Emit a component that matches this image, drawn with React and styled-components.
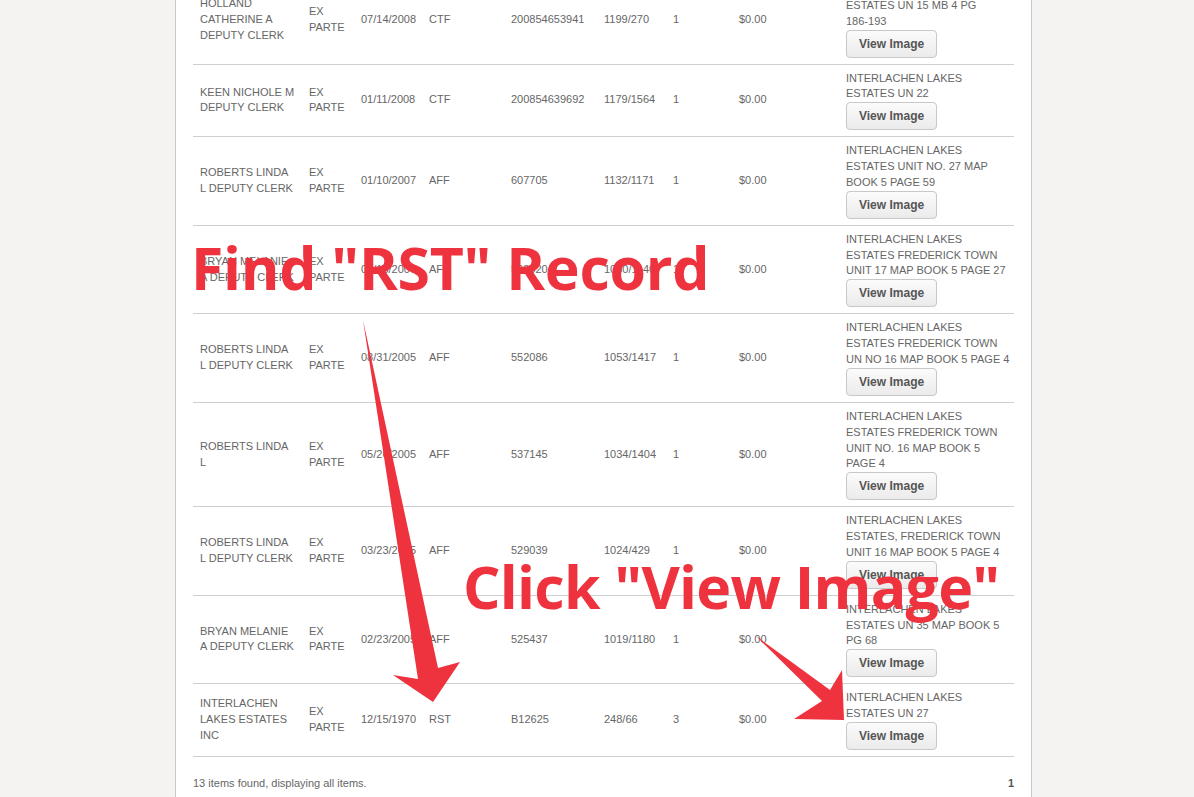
import styled, { createGlobalStyle } from 'styled-components';

const GlobalStyle = createGlobalStyle`
	html, body {
		margin: 0;
		padding: 0;
		background: #f4f3f1;
		overflow: hidden;
	}
`;

const rows = [
	{
		name: 'HOLLAND CATHERINE A DEPUTY CLERK',
		party: 'EX PARTE',
		date: '07/14/2008',
		kind: 'CTF',
		instrument: '200854653941',
		book: '1199/270',
		pages: '1',
		amount: '$0.00',
		legal: 'INTERLACHEN LAKES ESTATES UN 15 MB 4 PG',
		tail: '186-193',
	},
	{
		name: 'KEEN NICHOLE M DEPUTY CLERK',
		party: 'EX PARTE',
		date: '01/11/2008',
		kind: 'CTF',
		instrument: '200854639692',
		book: '1179/1564',
		pages: '1',
		amount: '$0.00',
		legal: 'INTERLACHEN LAKES ESTATES UN 22',
	},
	{
		name: 'ROBERTS LINDA L DEPUTY CLERK',
		party: 'EX PARTE',
		date: '01/10/2007',
		kind: 'AFF',
		instrument: '607705',
		book: '1132/1171',
		pages: '1',
		amount: '$0.00',
		legal: 'INTERLACHEN LAKES ESTATES UNIT NO. 27 MAP BOOK 5 PAGE 59',
	},
	{
		name: 'BRYAN MELANIE A DEPUTY CLERK',
		party: 'EX PARTE',
		date: '06/13/2006',
		kind: 'AFF',
		instrument: '563320',
		book: '1080/1140',
		pages: '1',
		amount: '$0.00',
		legal: 'INTERLACHEN LAKES ESTATES FREDERICK TOWN UNIT 17 MAP BOOK 5 PAGE 27',
	},
	{
		name: 'ROBERTS LINDA L DEPUTY CLERK',
		party: 'EX PARTE',
		date: '08/31/2005',
		kind: 'AFF',
		instrument: '552086',
		book: '1053/1417',
		pages: '1',
		amount: '$0.00',
		legal: 'INTERLACHEN LAKES ESTATES FREDERICK TOWN UN NO 16 MAP BOOK 5 PAGE 4',
	},
	{
		name: 'ROBERTS LINDA L',
		party: 'EX PARTE',
		date: '05/26/2005',
		kind: 'AFF',
		instrument: '537145',
		book: '1034/1404',
		pages: '1',
		amount: '$0.00',
		legal: 'INTERLACHEN LAKES ESTATES FREDERICK TOWN UNIT NO. 16 MAP BOOK 5 PAGE 4',
	},
	{
		name: 'ROBERTS LINDA L DEPUTY CLERK',
		party: 'EX PARTE',
		date: '03/23/2005',
		kind: 'AFF',
		instrument: '529039',
		book: '1024/429',
		pages: '1',
		amount: '$0.00',
		legal: 'INTERLACHEN LAKES ESTATES, FREDERICK TOWN UNIT 16 MAP BOOK 5 PAGE 4',
	},
	{
		name: 'BRYAN MELANIE A DEPUTY CLERK',
		party: 'EX PARTE',
		date: '02/23/2005',
		kind: 'AFF',
		instrument: '525437',
		book: '1019/1180',
		pages: '1',
		amount: '$0.00',
		legal: 'INTERLACHEN LAKES ESTATES UN 35 MAP BOOK 5 PG 68',
	},
	{
		name: 'INTERLACHEN LAKES ESTATES INC',
		party: 'EX PARTE',
		date: '12/15/1970',
		kind: 'RST',
		instrument: 'B12625',
		book: '248/66',
		pages: '3',
		amount: '$0.00',
		legal: 'INTERLACHEN LAKES ESTATES UN 27',
	},
];

const colWidths = [109, 52, 68, 82, 93, 69, 66, 107, 175];

const Stage = styled.div`
	position: relative;
	width: 1194px;
	height: 797px;
	overflow: hidden;
`;

const Panel = styled.div`
	width: 821px;
	margin: -24px 0 0 175px;
	padding: 0 17px 40px;
	background: #fff;
	border-left: 1px solid #c9c9c9;
	border-right: 1px solid #c9c9c9;
`;

const Table = styled.table`
	width: 821px;
	table-layout: fixed;
	border-collapse: collapse;
	font-family: 'Liberation Sans', Arial, sans-serif;
	font-size: 11px;
	line-height: 15.85px;
	color: #666;
`;

const Row = styled.tr`
	border-bottom: 1px solid #cfcfcf;
`;

const Cell = styled.td`
	padding: ${(p) => (p.$legal ? '6px 2px 6px 7px' : '6px 7px')};
	vertical-align: middle;
	text-align: left;
`;

const NoWrap = styled.span`
	white-space: nowrap;
`;

const ViewButton = styled.button`
	display: block;
	height: 28px;
	padding: 0 12px;
	font-family: 'Liberation Sans', Arial, sans-serif;
	font-size: 12px;
	font-weight: bold;
	color: #555;
	background: linear-gradient(#fbfbfb, #ebebeb);
	border: 1px solid #c8c8c8;
	border-radius: 4px;
`;

const Footer = styled.div`
	display: flex;
	justify-content: space-between;
	padding-top: 20px;
	font-family: 'Liberation Sans', Arial, sans-serif;
	font-size: 11px;
	color: #666;
`;

const PageNumber = styled.span`
	font-weight: bold;
	color: #555;
`;

const Callout = styled.div`
	position: absolute;
	left: ${(p) => p.$x}px;
	top: ${(p) => p.$y}px;
	font-family: 'Open Sans', 'Noto Sans', sans-serif;
	font-weight: bold;
	font-size: 59px;
	line-height: 1;
	letter-spacing: ${(p) => p.$spacing}px;
	color: #ee333f;
	white-space: nowrap;
`;

const Arrows = styled.svg`
	position: absolute;
	left: 0;
	top: 0;
	pointer-events: none;
`;

export default function App() {
	return (
		<Stage>
			<GlobalStyle />
			<Panel>
				<Table>
					<colgroup>
						{colWidths.map((w, i) => (
							<col key={i} style={{ width: w }} />
						))}
					</colgroup>
					<tbody>
						{rows.map((r, i) => (
							<Row key={i}>
								<Cell>{r.name}</Cell>
								<Cell>{r.party}</Cell>
								<Cell>{r.date}</Cell>
								<Cell>{r.kind}</Cell>
								<Cell>{r.instrument}</Cell>
								<Cell>{r.book}</Cell>
								<Cell>{r.pages}</Cell>
								<Cell>{r.amount}</Cell>
								<Cell $legal>
									{r.legal}
									{r.tail && (
										<>
											{' '}
											<NoWrap>{r.tail}</NoWrap>
										</>
									)}
									<ViewButton>View Image</ViewButton>
								</Cell>
							</Row>
						))}
					</tbody>
				</Table>
				<Footer>
					<span>13 items found, displaying all items.</span>
					<PageNumber>1</PageNumber>
				</Footer>
			</Panel>

			<Arrows width="1194" height="797" viewBox="0 0 1194 797">
				<polygon
					points="363,320 438,668 460,662 433,702 393,675 418,679"
					fill="#ee333f"
				/>
				<polygon
					points="756,636 830,690 842,670 844,720 794,719 822,701"
					fill="#ee333f"
				/>
			</Arrows>
			<Callout $x={191} $y={238} $spacing={-0.3}>
				Find "RST" Record
			</Callout>
			<Callout $x={463} $y={557} $spacing={-0.75}>
				Click "View Image"
			</Callout>
		</Stage>
	);
}
